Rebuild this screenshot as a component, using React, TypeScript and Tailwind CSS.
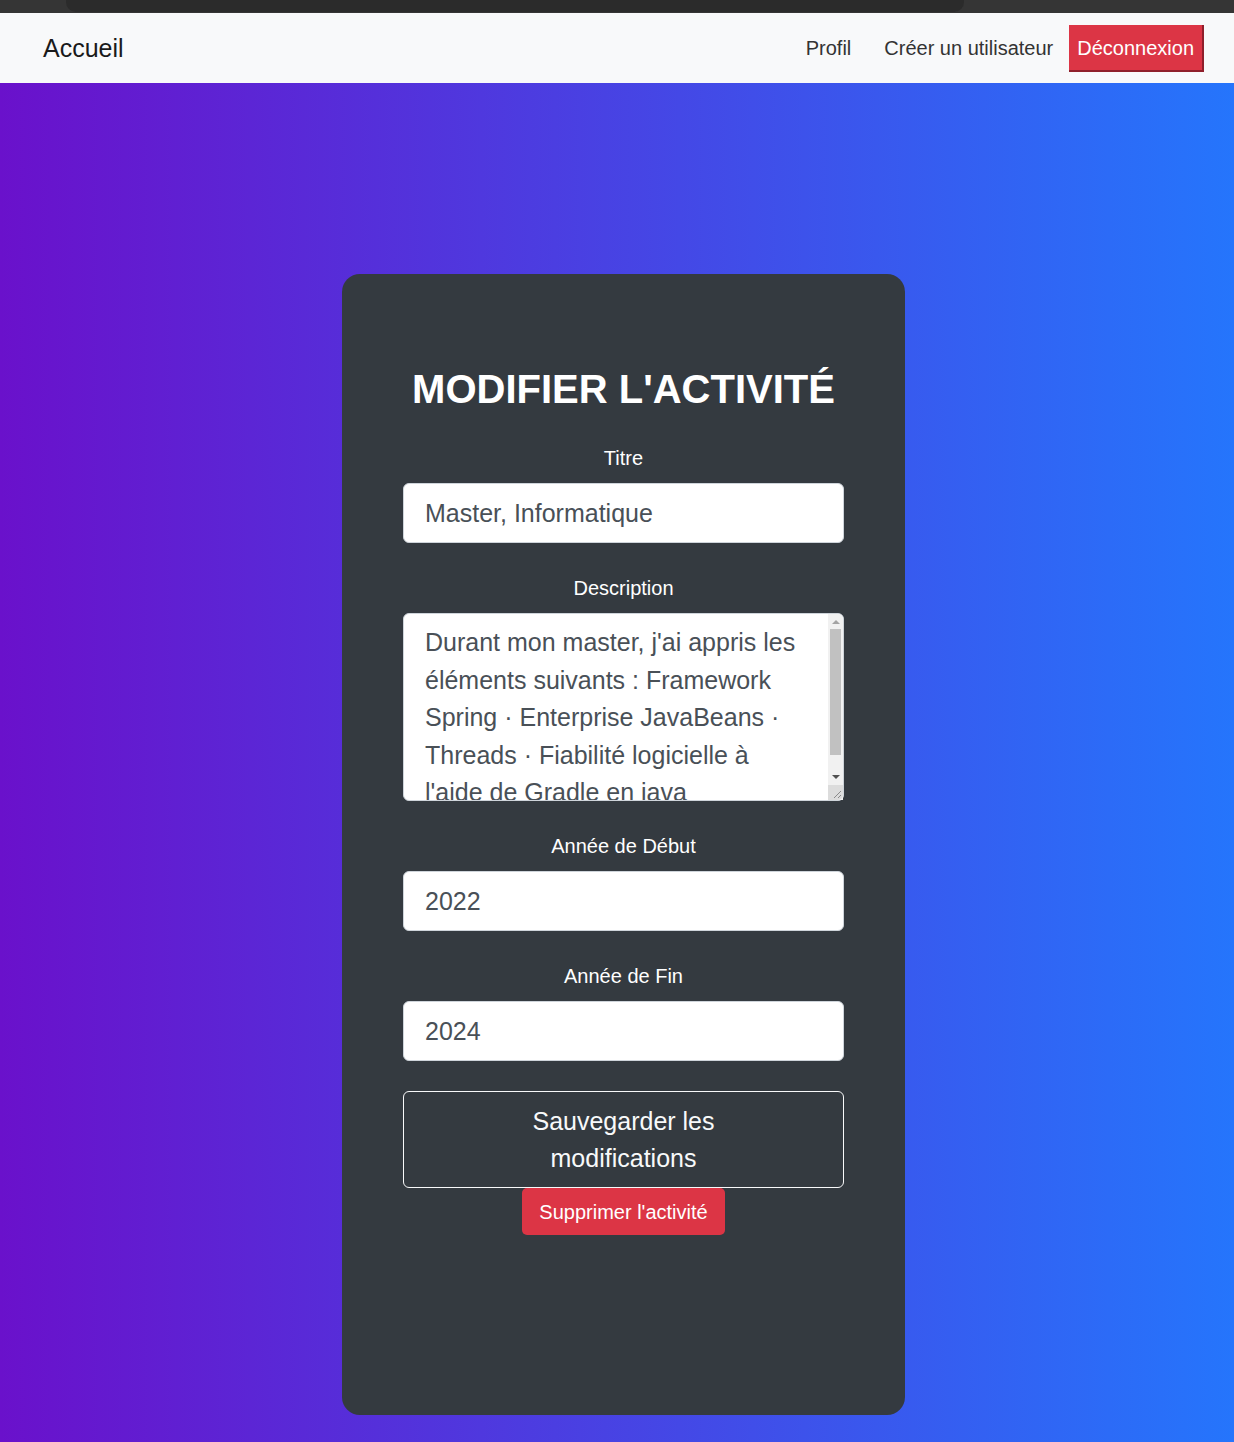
export default function App() {
  const font = { fontFamily: '"Liberation Sans", Arial, sans-serif' };
  const description =
    "Durant mon master, j'ai appris les éléments suivants : Framework Spring · Enterprise JavaBeans · Threads · Fiabilité logicielle à l'aide de Gradle en java";

  return (
    <div className="min-h-[1442px] flex flex-col" style={font}>
      {/* browser strip */}
      <div className="h-[13px] bg-[#353535] flex shrink-0">
        <div className="ml-[66px] w-[898px] h-[12px] bg-[#2b2b2b] rounded-b-[10px]" />
      </div>

      <header className="h-[70px] bg-[#f8f9fa] flex items-center shrink-0 pl-[43px] pr-[30px]">
        <a className="text-[25px] text-[#1a1a1a] leading-none">Accueil</a>
        <nav className="ml-auto flex items-center text-[20px] text-[#333]">
          <a className="px-[16px]">Profil</a>
          <a className="pl-[17px] pr-[16px]">Créer un utilisateur</a>
          <button className="h-[47px] pt-[2px] px-[8px] bg-[#dc3545] text-white border-r-2 border-b-2 border-[#8f1f2b]">
            Déconnexion
          </button>
        </nav>
      </header>

      <main className="flex-1 bg-[linear-gradient(to_right,#6a11cb,#2575fc)] flex justify-center pt-[191px] pb-[27px]">
        <div className="ml-[13px] w-[563px] h-[1141px] bg-[#343a40] rounded-[18px] px-[61px] pt-[91px] flex flex-col">
          <h2 className="text-[40px] leading-[48px] font-bold text-white text-center">MODIFIER L'ACTIVITÉ</h2>

          <label className="mt-[31px] text-[20px] leading-[29px] text-white text-center">Titre</label>
          <input
            defaultValue="Master, Informatique"
            className="mt-[10px] h-[60px] w-full bg-white border border-[#ced4da] rounded-[6px] px-[21px] text-[25px] text-[#495057] outline-none"
          />

          <label className="mt-[31px] text-[20px] leading-[29px] text-white text-center">Description</label>
          <div className="relative mt-[10px] h-[188px] w-full">
            <textarea
              defaultValue={description}
              className="h-full w-full resize-none bg-white border border-[#ced4da] rounded-[6px] pl-[21px] pr-[36px] pt-[10px] text-[25px] leading-[37.5px] text-[#495057] outline-none overflow-hidden"
            />
            {/* scrollbar + resize grip */}
            <div className="absolute right-[1px] top-[1px] bottom-[1px] w-[15px] bg-[#f1f1f1] rounded-tr-[5px] flex flex-col">
              <div className="h-[15px] flex items-center justify-center">
                <div className="w-0 h-0 border-l-[4px] border-r-[4px] border-b-[4px] border-l-transparent border-r-transparent border-b-[#a3a3a3]" />
              </div>
              <div className="mx-[2px] h-[126px] bg-[#c1c1c1]" />
              <div className="flex-1 flex items-end justify-center pb-[6px]">
                <div className="w-0 h-0 border-l-[4px] border-r-[4px] border-t-[4px] border-l-transparent border-r-transparent border-t-[#505050]" />
              </div>
              <div className="h-[15px] bg-[#dcdcdc] rounded-br-[5px] flex items-end justify-end">
                <svg width="15" height="15" viewBox="0 0 15 15">
                  <path d="M13 6 L6 13 M13 10 L10 13" stroke="#8a8a8a" strokeWidth="1" />
                </svg>
              </div>
            </div>
          </div>

          <label className="mt-[31px] text-[20px] leading-[29px] text-white text-center">Année de Début</label>
          <input
            defaultValue="2022"
            className="mt-[10px] h-[60px] w-full bg-white border border-[#ced4da] rounded-[6px] px-[21px] text-[25px] text-[#495057] outline-none"
          />

          <label className="mt-[31px] text-[20px] leading-[29px] text-white text-center">Année de Fin</label>
          <input
            defaultValue="2024"
            className="mt-[10px] h-[60px] w-full bg-white border border-[#ced4da] rounded-[6px] px-[21px] text-[25px] text-[#495057] outline-none"
          />

          <button className="mt-[30px] h-[97px] w-full border border-[#f8f9fa] rounded-[6px] px-[110px] text-[25px] leading-[37px] text-[#f8f9fa]">
            Sauvegarder les modifications
          </button>
          <div className="flex justify-center">
            <button className="h-[47px] px-[17px] bg-[#dc3545] rounded-[5px] text-[20px] text-white">
              Supprimer l'activité
            </button>
          </div>
        </div>
      </main>
    </div>
  );
}
